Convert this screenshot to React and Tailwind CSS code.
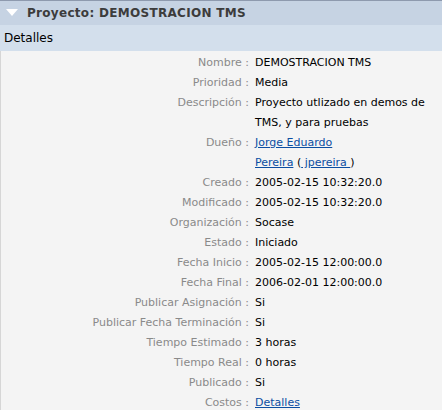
export default function App() {
  const rows = [
    ["Nombre", "DEMOSTRACION TMS"],
    ["Prioridad", "Media"],
    ["Descripción", "Proyecto utlizado en demos de TMS, y para pruebas"],
    ["Dueño", "owner"],
    ["Creado", "2005-02-15 10:32:20.0"],
    ["Modificado", "2005-02-15 10:32:20.0"],
    ["Organización", "Socase"],
    ["Estado", "Iniciado"],
    ["Fecha Inicio", "2005-02-15 12:00:00.0"],
    ["Fecha Final", "2006-02-01 12:00:00.0"],
    ["Publicar Asignación", "Si"],
    ["Publicar Fecha Terminación", "Si"],
    ["Tiempo Estimado", "3 horas"],
    ["Tiempo Real", "0 horas"],
    ["Publicado", "Si"],
    ["Costos", "costos"],
  ];
  return (
    <div className="w-[442px] h-[410px] bg-white overflow-hidden" style={{ fontFamily: '"DejaVu Sans", Verdana, sans-serif' }}>
      <div className="border-t border-[#8e9aae] bg-[#c6d3e3] h-[25px] flex items-center pl-[6px]">
        <svg width="12" height="8" viewBox="0 0 12 8" className="mr-[9px]">
          <polygon points="0,0 12,0 6,7" fill="#ffffff" />
        </svg>
        <span className="text-[12px] font-bold tracking-[0.3px] text-[#3c3c3c]">Proyecto: DEMOSTRACION TMS</span>
      </div>
      <div className="bg-[#d3dfec] h-[26px] flex items-center pl-[4px] text-[12px] text-black">Detalles</div>
      <div className="bg-[#f4f4f4] border-l border-[#d6d6d6] h-full pt-[2px]">
        <div className="grid grid-cols-[248px_1fr] text-[11px] leading-[20px]">
          {rows.map(([k, v]) => (
            <div key={k} className="contents">
              <div className="text-right text-[#8a8a8a] whitespace-nowrap">{k} :</div>
              <div className="pl-[6px] pr-[12px] text-black">
                {v === "owner" ? (
                  <span>
                    <a className="text-[#0b4ea2] underline" href="#">Jorge Eduardo Pereira</a>
                    {"\u00a0("}
                    <a className="text-[#0b4ea2] underline" href="#">{"\u00a0jpereira\u00a0"}</a>
                    {")"}
                  </span>
                ) : v === "costos" ? (
                  <a className="text-[#0b4ea2] underline" href="#">Detalles</a>
                ) : (
                  v
                )}
              </div>
            </div>
          ))}
        </div>
      </div>
    </div>
  );
}
